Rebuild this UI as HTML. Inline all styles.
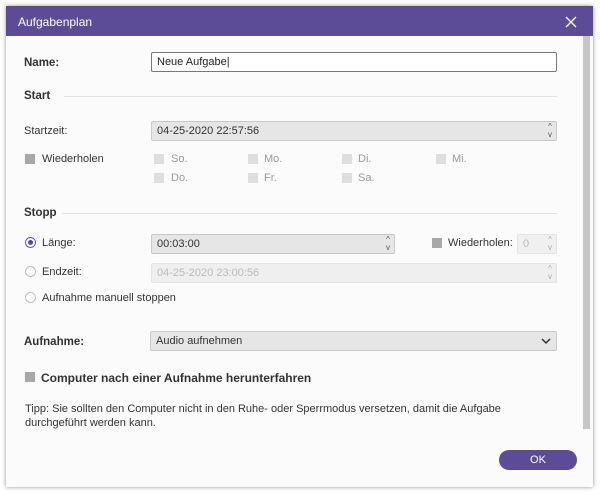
<!DOCTYPE html>
<html><head><style>
*{margin:0;padding:0;box-sizing:border-box}
body{width:600px;height:493px;background:#fff;font-family:"Liberation Sans",sans-serif;font-size:11px;color:#333;position:relative;overflow:hidden}
.dlg{position:absolute;left:6px;top:6px;width:587px;height:481px;background:#fbfbfb;box-shadow:0 0 4px rgba(0,0,0,.45)}
.t{position:absolute;left:0;top:0;width:587px;height:30px;background:#5c4b97;color:#fff;font-size:12px;padding:9px 0 0 12px}
.a{position:absolute;white-space:nowrap}
.b{font-weight:bold;font-size:11.5px}
.in{position:absolute;border:1px solid #c8c8c8;background:#e6e6e6;border-radius:2px;height:20px;padding:3px 0 0 5px}
.cb{position:absolute;width:10px;height:10px;background:#a8a8a8}
.cbl{position:absolute;width:10px;height:10px;background:#dedede}
.lt{color:#999}
.ln{position:absolute;height:1px;background:#e2e2e2}
.r{position:absolute;width:11px;height:11px;border:1px solid #bbb;border-radius:50%;background:#fff}
.sp{position:absolute;right:4px;top:1px;font-size:8px;line-height:8px;color:#555;text-align:center}
</style></head><body>
<div class="dlg">
<div class="t">Aufgabenplan</div>
<svg class="a" style="left:559px;top:10px" width="12" height="12"><path d="M1 1L11 11M11 1L1 11" stroke="#fff" stroke-width="1.3"/></svg>
<div class="a" style="left:577px;top:30px;width:7px;height:393px;background:#c6c6c6"></div>
</div>

<div class="a b" style="left:24px;top:57px">Name:</div>
<div class="in" style="left:151px;top:52px;width:406px;background:#fff;border-color:#777;color:#222">Neue Aufgabe|</div>

<div class="a b" style="left:24px;top:90px">Start</div>
<div class="ln" style="left:64px;top:96px;width:493px"></div>

<div class="a" style="left:24px;top:125px">Startzeit:</div>
<div class="in" style="left:151px;top:121px;width:406px">04-25-2020 22:57:56<div class="sp">^<br>v</div></div>

<div class="cb" style="left:25px;top:154px"></div><div class="a" style="left:42px;top:153px">Wiederholen</div>
<div class="cbl" style="left:154px;top:154px"></div><div class="a lt" style="left:171px;top:153px">So.</div>
<div class="cbl" style="left:248px;top:154px"></div><div class="a lt" style="left:264px;top:153px">Mo.</div>
<div class="cbl" style="left:342px;top:154px"></div><div class="a lt" style="left:358px;top:153px">Di.</div>
<div class="cbl" style="left:436px;top:154px"></div><div class="a lt" style="left:452px;top:153px">Mi.</div>
<div class="cbl" style="left:154px;top:173px"></div><div class="a lt" style="left:171px;top:172px">Do.</div>
<div class="cbl" style="left:248px;top:173px"></div><div class="a lt" style="left:264px;top:172px">Fr.</div>
<div class="cbl" style="left:342px;top:173px"></div><div class="a lt" style="left:358px;top:172px">Sa.</div>

<div class="a b" style="left:24px;top:207px">Stopp</div>
<div class="ln" style="left:62px;top:213px;width:495px"></div>

<div class="r" style="left:25px;top:237px;border-color:#6a5aa8"><div style="position:absolute;left:2px;top:2px;width:5px;height:5px;border-radius:50%;background:#5c4b97"></div></div>
<div class="a" style="left:42px;top:237px">Länge:</div>
<div class="in" style="left:151px;top:234px;width:244px">00:03:00<div class="sp">^<br>v</div></div>
<div class="cb" style="left:432px;top:238px"></div><div class="a" style="left:448px;top:237px">Wiederholen:</div>
<div class="in" style="left:517px;top:234px;width:40px;background:#f0f0f0;border-color:#e4e4e4;color:#bbb">0<div class="sp" style="color:#aaa">^<br>v</div></div>

<div class="r" style="left:25px;top:266px"></div>
<div class="a" style="left:42px;top:266px">Endzeit:</div>
<div class="in" style="left:151px;top:263px;width:406px;background:#efefef;border-color:#e4e4e4;color:#bbb">04-25-2020 23:00:56<div class="sp" style="color:#aaa">^<br>v</div></div>

<div class="r" style="left:25px;top:292px"></div>
<div class="a" style="left:42px;top:292px">Aufnahme manuell stoppen</div>

<div class="a b" style="left:24px;top:336px">Aufnahme:</div>
<div class="in" style="left:150px;top:331px;width:407px;color:#333">Audio aufnehmen
<svg style="position:absolute;right:5px;top:6px" width="10" height="7"><path d="M1 1L5 5L9 1" stroke="#333" stroke-width="1.5" fill="none"/></svg></div>

<div class="cb" style="left:25px;top:372px"></div>
<div class="a b" style="left:41px;top:371px;font-size:12px">Computer nach einer Aufnahme herunterfahren</div>

<div class="a" style="left:25px;top:402px;line-height:14px">Tipp: Sie sollten den Computer nicht in den Ruhe- oder Sperrmodus versetzen, damit die Aufgabe<br>durchgeführt werden kann.</div>

<div class="a" style="left:499px;top:450px;width:78px;height:20px;border-radius:10px;background:#5c4b97;color:#fff;text-align:center;padding-top:4px">OK</div>
</body></html>
